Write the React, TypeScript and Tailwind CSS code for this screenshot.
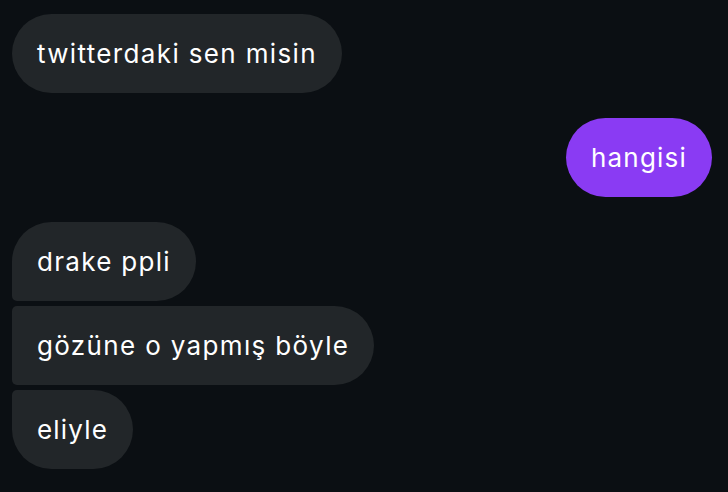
export default function App() {
  const font = { fontFamily: "Inter, 'Noto Sans', sans-serif" };
  return (
    <div
      className="w-[728px] h-[492px] bg-[#0b0f13] text-white px-3 pt-[14px] flex flex-col"
      style={font}
    >
      <div className="flex">
        <div className="h-[79px] flex items-center px-[25px] rounded-[40px] bg-[#222629] text-[26px] tracking-[1.35px]">
          twitterdaki sen misin
        </div>
      </div>

      <div className="flex justify-end mt-[25px] pr-1">
        <div className="h-[79px] flex items-center px-[25px] rounded-[40px] bg-[#8a3bf3] text-[26px] tracking-[1.2px]">
          hangisi
        </div>
      </div>

      <div className="flex flex-col items-start gap-[5px] mt-[25px]">
        <div className="h-[79px] flex items-center px-[25px] rounded-tl-[40px] rounded-r-[40px] rounded-bl-[5px] bg-[#222629] text-[26px] tracking-[1.3px]">
          drake ppli
        </div>
        <div className="h-[79px] flex items-center px-[25px] rounded-l-[5px] rounded-r-[40px] bg-[#222629] text-[26px] tracking-[1.35px]">
          gözüne o yapmış böyle
        </div>
        <div className="h-[79px] flex items-center px-[25px] rounded-tl-[5px] rounded-r-[40px] rounded-bl-[40px] bg-[#222629] text-[26px] tracking-[1.2px]">
          eliyle
        </div>
      </div>
    </div>
  );
}
